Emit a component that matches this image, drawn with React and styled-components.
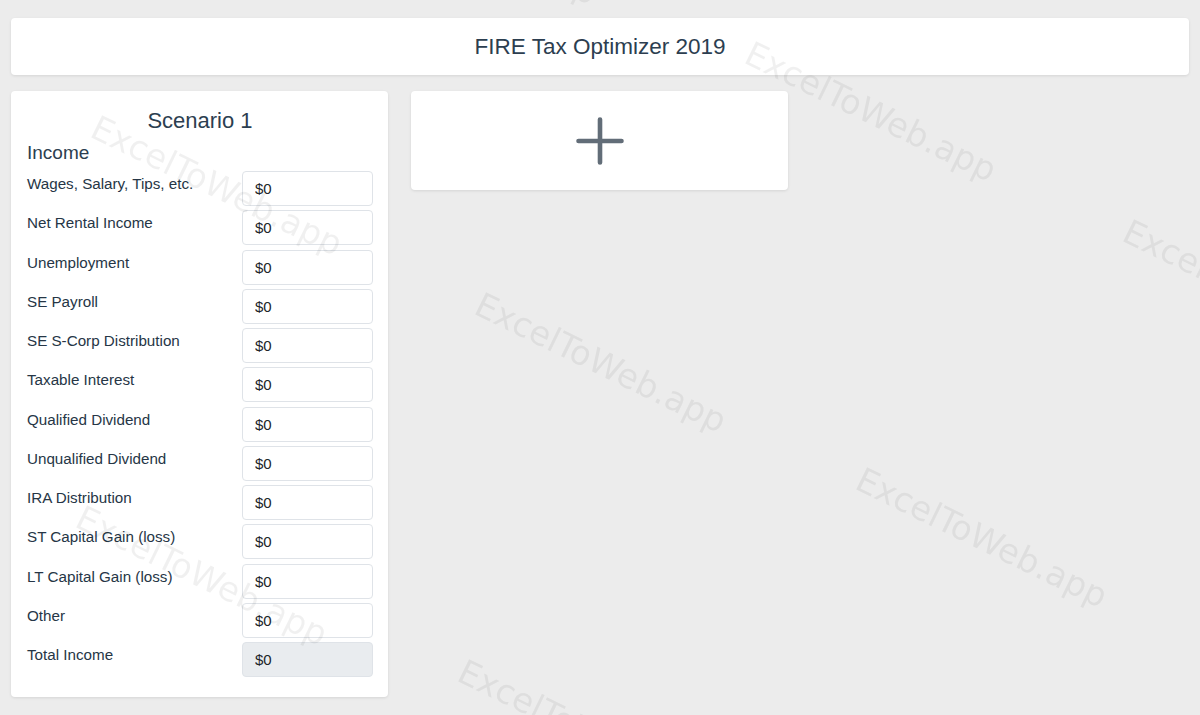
import styled, { createGlobalStyle } from "styled-components";

const GlobalStyle = createGlobalStyle`
  html, body {
    margin: 0;
    padding: 0;
    background: #ececec;
    font-family: "Liberation Sans", Arial, sans-serif;
    color: #2c3e50;
  }
  * {
    box-sizing: border-box;
  }
`;

const incomeRows = [
  "Wages, Salary, Tips, etc.",
  "Net Rental Income",
  "Unemployment",
  "SE Payroll",
  "SE S-Corp Distribution",
  "Taxable Interest",
  "Qualified Dividend",
  "Unqualified Dividend",
  "IRA Distribution",
  "ST Capital Gain (loss)",
  "LT Capital Gain (loss)",
  "Other",
];

// watermark positions (top-left of the text), they sit over the page
const marks = [
  { x: 101, y: 110 },
  { x: 755, y: 36 },
  { x: 1133, y: 214 },
  { x: 485, y: 287 },
  { x: 866, y: 462 },
  { x: 86, y: 500 },
  { x: 468, y: 654 },
  { x: 356, y: -141 },
];

const App = () => {
  return (
    <>
      <GlobalStyle />
      <Page>
        <Header>
          <Title>FIRE Tax Optimizer 2019</Title>
        </Header>
        <Cards>
          <ScenarioCard>
            <ScenarioTitle>Scenario 1</ScenarioTitle>
            <SectionTitle>Income</SectionTitle>
            {incomeRows.map((label) => (
              <Row key={label}>
                <Label>{label}</Label>
                <Field type="text" defaultValue="$0" />
              </Row>
            ))}
            <Row>
              <Label>Total Income</Label>
              <Field type="text" value="$0" readOnly $disabled />
            </Row>
          </ScenarioCard>
          <AddCard type="button" aria-label="Add scenario">
            <svg width="48" height="48" viewBox="0 0 48 48">
              <path
                d="M2.5 24h43M24 2.5v43"
                stroke="#626d78"
                strokeWidth="4.6"
                strokeLinecap="round"
                fill="none"
              />
            </svg>
          </AddCard>
        </Cards>
      </Page>
      <Watermarks>
        {marks.map((m, i) => (
          <Mark key={i} style={{ left: m.x, top: m.y }}>
            ExcelToWeb.app
          </Mark>
        ))}
      </Watermarks>
    </>
  );
};

const Page = styled.div`
  min-height: 100vh;
  padding: 18px 11px 18px 11px;
  display: flex;
  flex-direction: column;
  gap: 16px;
`;

const Header = styled.div`
  height: 57px;
  background: #fff;
  border-radius: 4px;
  box-shadow: 0 1px 3px rgba(0, 0, 0, 0.1);
  display: flex;
  align-items: center;
  justify-content: center;
`;

const Title = styled.h1`
  margin: 0;
  font-size: 22.5px;
  font-weight: 400;
  color: #2c3e50;
`;

const Cards = styled.div`
  display: flex;
  align-items: flex-start;
  gap: 23px;
`;

const ScenarioCard = styled.div`
  width: 377px;
  background: #fff;
  border-radius: 4px;
  box-shadow: 0 1px 3px rgba(0, 0, 0, 0.1);
  padding: 17px 15px 16px 16px;
  display: flex;
  flex-direction: column;
`;

const ScenarioTitle = styled.h2`
  margin: 0;
  text-align: center;
  font-size: 22px;
  font-weight: 400;
  line-height: 26px;
  color: #2c3e50;
`;

const SectionTitle = styled.h3`
  margin: 7px 0 6px;
  font-size: 19px;
  font-weight: 400;
  line-height: 24px;
  color: #2c3e50;
`;

const Row = styled.div`
  display: flex;
  justify-content: space-between;
  align-items: flex-start;
  height: 39.25px;
`;

const Label = styled.span`
  padding-top: 4px;
  font-size: 15.2px;
  line-height: 18px;
  color: #263646;
`;

const Field = styled.input`
  width: 131px;
  height: 35px;
  padding: 0 12px;
  border: 1px solid #dfe3e8;
  border-radius: 4px;
  background: ${(p) => (p.$disabled ? "#e9ecef" : "#fff")};
  font-family: "Liberation Sans", Arial, sans-serif;
  font-size: 15px;
  color: #212529;
  outline: none;
`;

const AddCard = styled.button`
  width: 377px;
  height: 99px;
  background: #fff;
  border: none;
  border-radius: 4px;
  box-shadow: 0 1px 3px rgba(0, 0, 0, 0.1);
  display: flex;
  align-items: center;
  justify-content: center;
  cursor: pointer;
  padding: 0;
`;

const Watermarks = styled.div`
  position: fixed;
  inset: 0;
  overflow: hidden;
  pointer-events: none;
`;

const Mark = styled.span`
  position: absolute;
  font-family: "DejaVu Sans", sans-serif;
  font-size: 34px;
  line-height: 1;
  white-space: nowrap;
  color: rgba(0, 0, 0, 0.06);
  transform: rotate(26deg);
  transform-origin: left top;
`;

export default App;
